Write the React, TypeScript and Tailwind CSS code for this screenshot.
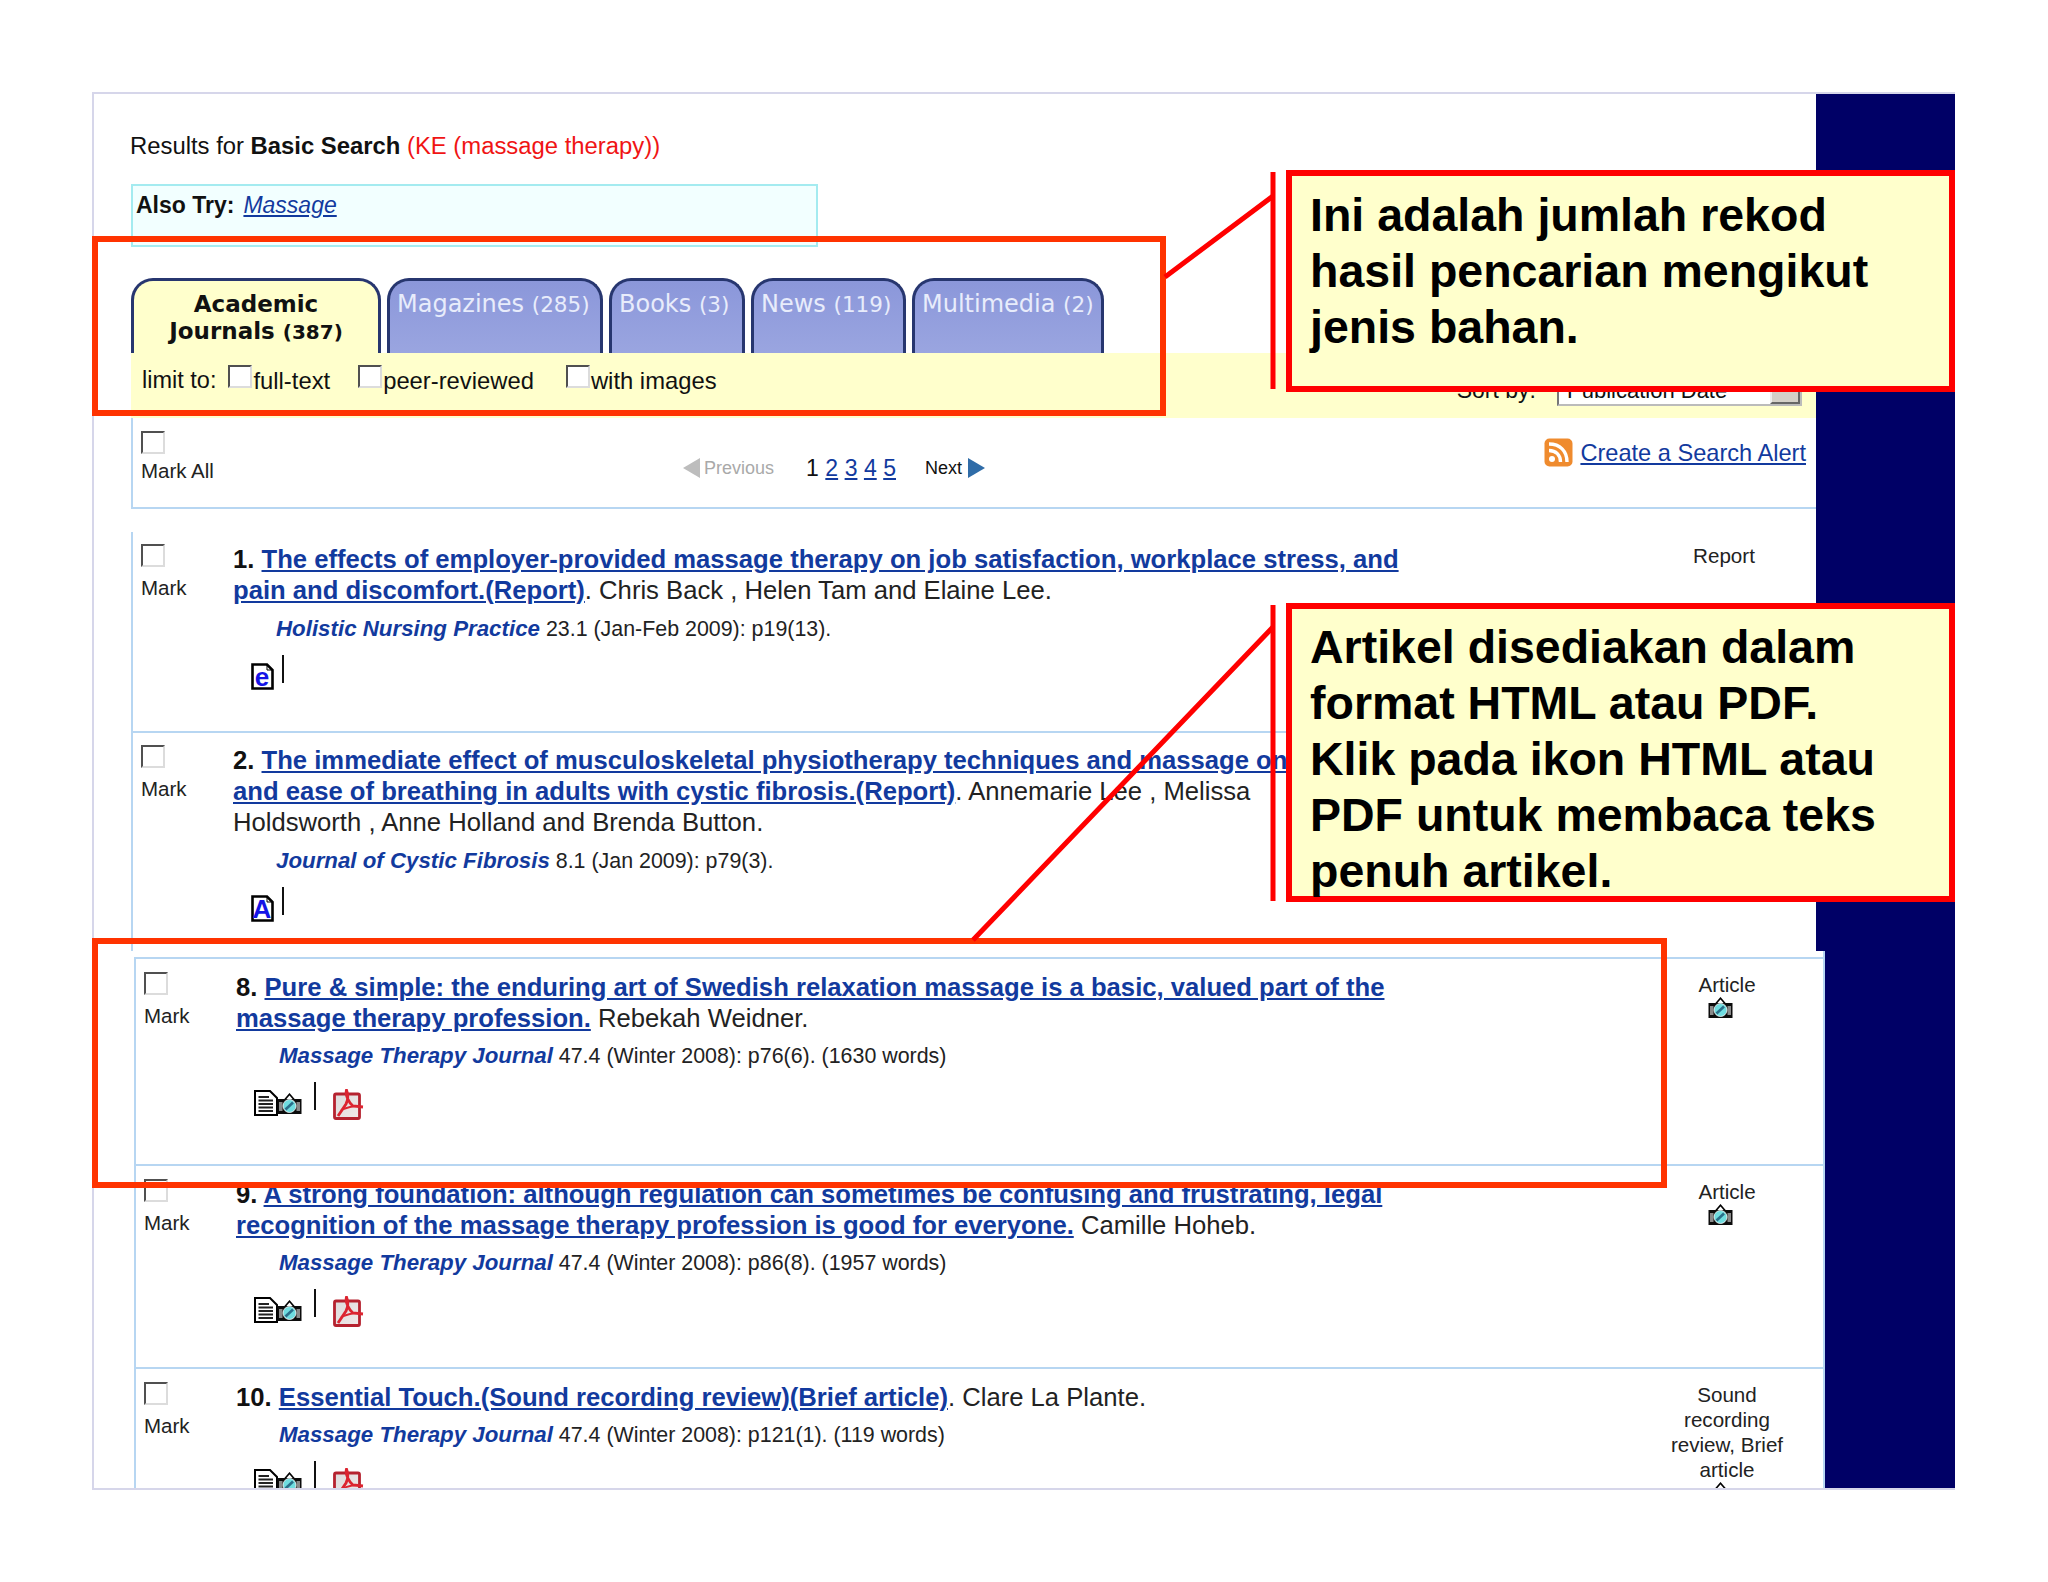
import React from "react";

const sans = "font-['Liberation_Sans',Arial,sans-serif]";
const linkCls = "text-[#123a9e] underline";

type Result = {
  n: string;
  title: string[];
  author?: string;
  authorNext?: string;
  journal: string;
  cite: string;
  type: string[];
  h: string;
  kind: "e" | "A" | "full";
};

function Box({ className = "" }: { className?: string }) {
  return (
    <input
      type="checkbox"
      readOnly
      className={`block h-[23px] w-[24px] appearance-none border-2 border-t-[#505050] border-l-[#505050] border-r-[#dcdcdc] border-b-[#dcdcdc] bg-white ${className}`}
    />
  );
}

function LetterDoc({ letter }: { letter: string }) {
  return (
    <svg width="23" height="27" viewBox="0 0 23 27">
      <path d="M1.5 1.5H16L21.5 7V25.5H1.5Z" fill="#fff" stroke="#000" strokeWidth="2.6" />
      <path d="M16 1.5V7H21.5" fill="none" stroke="#000" strokeWidth="1" />
      <text x="11" y="22.5" textAnchor="middle" fontFamily="Liberation Sans" fontWeight="700" fontSize="26" fill="#1414e6">{letter}</text>
    </svg>
  );
}

function Cam() {
  return (
    <svg width="25" height="22" viewBox="0 0 25 22">
      <path d="M7.5 7 12.5 1.2 17.5 7" fill="#fff" stroke="#000" strokeWidth="1.6" />
      <rect x="0.5" y="6" width="24" height="15" fill="#0c0c0c" />
      <rect x="2" y="9" width="3.5" height="9" fill="#8a8a8a" />
      <rect x="19.5" y="9" width="3.5" height="9" fill="#8a8a8a" />
      <circle cx="12.5" cy="13" r="6.5" fill="#6fdde0" stroke="#fff" strokeWidth="0.8" />
      <path d="M8.5 16.5 16 9.5" stroke="#2a6f8a" strokeWidth="2.6" />
    </svg>
  );
}

function HtmlCam() {
  return (
    <div className="flex items-end">
      <svg width="24" height="26" viewBox="0 0 24 26">
        <path d="M1 1H16L23 8V25H1Z" fill="#fff" stroke="#000" strokeWidth="2" />
        <path d="M4.5 7H15M4.5 10.5H19M4.5 14H19M4.5 17.5H19M4.5 21H19" stroke="#222" strokeWidth="1.8" />
      </svg>
      <div className="-ml-px mb-[1px]"><Cam /></div>
    </div>
  );
}

function PdfIcon() {
  return (
    <svg width="31" height="31" viewBox="0 0 31 31">
      <defs>
        <linearGradient id="pdfFill" x1="0" y1="0" x2="1" y2="1">
          <stop offset="0" stopColor="#dcdcdc" />
          <stop offset="1" stopColor="#f2e8e8" />
        </linearGradient>
      </defs>
      <rect x="1.5" y="5" width="25" height="24.5" rx="1.5" fill="url(#pdfFill)" stroke="#b5222f" strokeWidth="2.8" />
      <path d="M5 27 13 15C15 11 15 5 13.5 1 12 6 16 14 20 17L30 18" fill="none" stroke="#dc2430" strokeWidth="2.8" />
      <path d="M8 21C13 19 19 17 24 17" fill="none" stroke="#dc2430" strokeWidth="1.8" />
    </svg>
  );
}

function Rss() {
  return (
    <svg width="29" height="29" viewBox="0 0 29 29">
      <rect x="0.5" y="0.5" width="28" height="28" rx="5" fill="#ef8b2e" />
      <circle cx="8" cy="21" r="3" fill="#fff" />
      <path d="M5 12.5C12 12.5 16.5 17 16.5 24M5 6C16 6 23 13 23 24" fill="none" stroke="#fff" strokeWidth="3.4" />
    </svg>
  );
}

function Row({ r, first }: { r: Result; first?: boolean }) {
  return (
    <div className={`flex border-l-2 border-[#b7d6f2] ${r.h} ${first ? "" : "border-t-2"}`}>
      <div className={`w-[100px] shrink-0 pl-[8px] ${first ? "pt-[12px]" : "pt-[13px]"}`}>
        <Box />
        <div className="mt-[9px] text-[20.5px] leading-[24px] text-[#222]">Mark</div>
      </div>
      <div className={`min-w-0 flex-1 ${first ? "pt-[12px]" : "pt-[13px]"}`}>
        <div className="whitespace-nowrap text-[25.65px] leading-[31px] text-[#222]">
          {r.title.map((line, i) => (
            <div key={i}>
              {i === 0 && <b className="text-[#111]">{r.n}. </b>}
              <a className={`font-bold ${linkCls}`}>{line}</a>
              {i === r.title.length - 1 && r.author && <span>{r.author}</span>}
            </div>
          ))}
          {r.authorNext && <div>{r.authorNext}</div>}
        </div>
        <div className={`whitespace-nowrap pl-[43px] text-[21.4px] leading-[26px] text-[#222] ${first ? "mt-[10px]" : "mt-[9px]"}`}>
          <i className="text-[22.3px] font-bold text-[#123a9e]">{r.journal}</i> {r.cite}
        </div>
        <div className="mt-[13px] flex items-start pl-[18px]">
          {r.kind === "full" ? (
            <>
              <div className="mt-[8px] w-[60px]"><HtmlCam /></div>
              <div className="h-[28px] w-[2px] bg-[#111]" />
              <div className="ml-[17px] mt-[7px]"><PdfIcon /></div>
            </>
          ) : (
            <>
              <div className="mt-[8px] w-[31px]"><LetterDoc letter={r.kind} /></div>
              <div className="h-[28px] w-[2px] bg-[#111]" />
            </>
          )}
        </div>
      </div>
      <div className={`shrink-0 text-center text-[20.6px] leading-[25px] text-[#222] ${first ? "w-[184px] pt-[11px]" : "w-[188px] pr-[4px] pt-[13px]"}`}>
        {r.type.map((t) => <div key={t}>{t}</div>)}
        {r.kind === "full" && <div className="flex justify-center pr-[14px]"><Cam /></div>}
      </div>
    </div>
  );
}

const topRows: Result[] = [
  {
    n: "1",
    title: ["The effects of employer-provided massage therapy on job satisfaction, workplace stress, and", "pain and discomfort.(Report)"],
    author: ". Chris Back , Helen Tam  and Elaine Lee.",
    journal: "Holistic Nursing Practice",
    cite: "23.1 (Jan-Feb 2009): p19(13).",
    type: ["Report"],
    h: "h-[199px]",
    kind: "e",
  },
  {
    n: "2",
    title: ["The immediate effect of musculoskeletal physiotherapy techniques and massage on", "and ease of breathing in adults with cystic fibrosis.(Report)"],
    author: ". Annemarie Lee , Melissa",
    authorNext: "Holdsworth , Anne Holland  and Brenda Button.",
    journal: "Journal of Cystic Fibrosis",
    cite: "8.1 (Jan 2009): p79(3).",
    type: ["Report"],
    h: "h-[220px]",
    kind: "A",
  },
];

const bottomRows: Result[] = [
  {
    n: "8",
    title: ["Pure & simple: the enduring art of Swedish relaxation massage is a basic, valued part of the", "massage therapy profession."],
    author: " Rebekah Weidner.",
    journal: "Massage Therapy Journal",
    cite: "47.4 (Winter 2008): p76(6). (1630 words)",
    type: ["Article"],
    h: "h-[207px]",
    kind: "full",
  },
  {
    n: "9",
    title: ["A strong foundation: although regulation can sometimes be confusing and frustrating, legal", "recognition of the massage therapy profession is good for everyone."],
    author: " Camille Hoheb.",
    journal: "Massage Therapy Journal",
    cite: "47.4 (Winter 2008): p86(8). (1957 words)",
    type: ["Article"],
    h: "h-[203px]",
    kind: "full",
  },
  {
    n: "10",
    title: ["Essential Touch.(Sound recording review)(Brief article)"],
    author: ". Clare La Plante.",
    journal: "Massage Therapy Journal",
    cite: "47.4 (Winter 2008): p121(1). (119 words)",
    type: ["Sound", "recording", "review, Brief", "article"],
    h: "h-[200px]",
    kind: "full",
  },
];

const tabs = [
  { name: "Magazines", count: "(285)", w: "w-[216px]" },
  { name: "Books", count: "(3)", w: "w-[136px]" },
  { name: "News", count: "(119)", w: "w-[155px]" },
  { name: "Multimedia", count: "(2)", w: "w-[192px]" },
];

const tabShape = "h-[75px] rounded-t-[22px] border-[3px] border-b-0 border-[#27366f]";

function Callout({ className, lines }: { className: string; lines: string[] }) {
  return (
    <div className={`absolute left-[1286px] w-[669px] border-[6px] border-[#ff0000] bg-[#ffffcc] pl-[18px] text-[46.5px] font-bold leading-[56px] text-black ${className}`}>
      {lines.map((l) => <div key={l} className="whitespace-nowrap">{l}</div>)}
    </div>
  );
}

export default function App() {
  return (
    <div className={`relative h-[1582px] w-[2048px] overflow-hidden bg-white pl-[92px] pt-[92px] ${sans}`}>
      <div className="flex h-[1398px] w-[1863px] flex-col overflow-hidden border-2 border-r-0 border-[#d6d6ea] bg-[#000066]">
        {/* first sheet */}
        <div className="h-[857px] w-[1722px] shrink-0 bg-white pl-[37px] pt-[36px]">
          <div className="-ml-px text-[23.85px] leading-[32px] text-[#111]">
            Results for <b>Basic Search</b> <span className="text-[#f01414]">(KE (massage therapy))</span>
          </div>
          <div className="mt-[22px] h-[63px] w-[687px] border-2 border-[#a4ebf0] bg-[#f2ffff] pl-[3px] pt-[3px] text-[23px] leading-[32px]">
            <b className="text-[#111]">Also Try:</b>
            <i className={`ml-[9px] ${linkCls}`}>Massage</i>
          </div>

          <div className="mt-[31px] flex gap-[6px]">
            <div className={`${tabShape} w-[250px] bg-[#ffffcc] pt-[10px] text-center font-['DejaVu_Sans',sans-serif] text-[23px] font-bold leading-[27px] text-[#111]`}>
              Academic<br />Journals <span className="text-[20px]">(387)</span>
            </div>
            {tabs.map((t) => (
              <div key={t.name} className={`${tabShape} ${t.w} whitespace-nowrap bg-gradient-to-b from-[#8b97da] to-[#9aa5e0] pl-[7px] pt-[10px] font-['DejaVu_Sans',sans-serif] text-[24px] leading-[27px] text-[#e8ecfb]`}>
                {t.name} <span className="text-[21.5px]">{t.count}</span>
              </div>
            ))}
          </div>

          <div className="flex h-[65px] items-center bg-[#ffffcc] pl-[11px] pr-[14px] text-[23.8px] text-[#111]">
            <div className="-mt-[10px] flex items-center">
              <span className="text-[23.5px]">limit to:</span>
              <label className="ml-[12px] flex items-center gap-[1px]"><Box className="-mt-[8px]" />full-text</label>
              <label className="ml-[28px] flex items-center gap-[1px]"><Box className="-mt-[8px]" />peer-reviewed</label>
              <label className="ml-[32px] flex items-center gap-[1px]"><Box className="-mt-[8px]" />with images</label>
            </div>
            <div className="ml-auto mt-[10px] flex items-center gap-[21px] text-[23px]">
              <span>Sort by:</span>
              <div className="flex h-[31px] w-[245px] items-stretch border-2 border-[#777] border-r-[#bbb] border-b-[#bbb] bg-white text-[22px] leading-[27px]">
                <span className="flex-1 pl-[8px]">Publication Date</span>
                <span className="w-[30px] border-2 border-[#eee] border-r-[#666] border-b-[#666] bg-[#d4d0c8]" />
              </div>
            </div>
          </div>

          <div className="flex h-[91px] items-start border-b-2 border-l-2 border-[#b7d6f2] pl-[8px] pr-[10px]">
            <div className="w-[542px] pt-[13px]">
              <Box />
              <div className="mt-[5px] text-[20.5px] leading-[24px] text-[#222]">Mark All</div>
            </div>
            <div className="flex items-center pt-[37px] leading-[26px]">
              <svg width="17" height="20" viewBox="0 0 17 20"><path d="M17 0V20L0 10Z" fill="#bdbdbd" /></svg>
              <span className="ml-[4px] text-[18px] text-[#a9a9a9]">Previous</span>
              <span className="ml-[32px] text-[23px] text-[#111]">1</span>
              {["2", "3", "4", "5"].map((p) => (
                <a key={p} className={`ml-[6.5px] text-[23px] ${linkCls}`}>{p}</a>
              ))}
              <span className="ml-[29px] text-[18px] text-[#111]">Next</span>
              <svg className="ml-[6px]" width="17" height="20" viewBox="0 0 17 20"><path d="M0 0V20L17 10Z" fill="#2f6ca8" /></svg>
            </div>
            <div className="ml-auto flex items-center gap-[7px] pt-[20px]">
              <Rss />
              <a className={`text-[23.6px] leading-[28px] ${linkCls}`}>Create a Search Alert</a>
            </div>
          </div>

          <div className="pt-[23px]">
            {topRows.map((r, i) => (
              <div key={r.n} className={i === 1 ? "border-t-2 border-[#b7d6f2]" : ""}>
                <Row r={r} first />
              </div>
            ))}
          </div>
        </div>

        {/* second sheet */}
        <div className="w-[1731px] flex-1 overflow-hidden border-r-2 border-[#b7d6f2] bg-white pl-[40px] pt-[6px]">
          {bottomRows.map((r) => <Row key={r.n} r={r} />)}
        </div>
      </div>

      {/* annotations */}
      <div className="absolute left-[92px] top-[236px] h-[180px] w-[1074px] border-[6px] border-[#ff3300]" />
      <div className="absolute left-[92px] top-[938px] h-[250px] w-[1575px] border-[6px] border-[#ff3300]" />
      <svg className="absolute left-0 top-0" width="2048" height="1582" viewBox="0 0 2048 1582" fill="none">
        <path d="M1165 277 1273 196M973 940 1273 627" stroke="#ff0000" strokeWidth="5" />
        <path d="M1273 172V389M1273 605V901" stroke="#ff0000" strokeWidth="5" />
      </svg>
      <Callout className="top-[170px] h-[222px] pt-[11px]" lines={["Ini adalah jumlah rekod", "hasil pencarian mengikut", "jenis bahan."]} />
      <Callout className="top-[603px] h-[299px] pt-[10px]" lines={["Artikel disediakan dalam", "format HTML atau PDF.", "Klik pada ikon HTML atau", "PDF untuk membaca teks", "penuh artikel."]} />
    </div>
  );
}
